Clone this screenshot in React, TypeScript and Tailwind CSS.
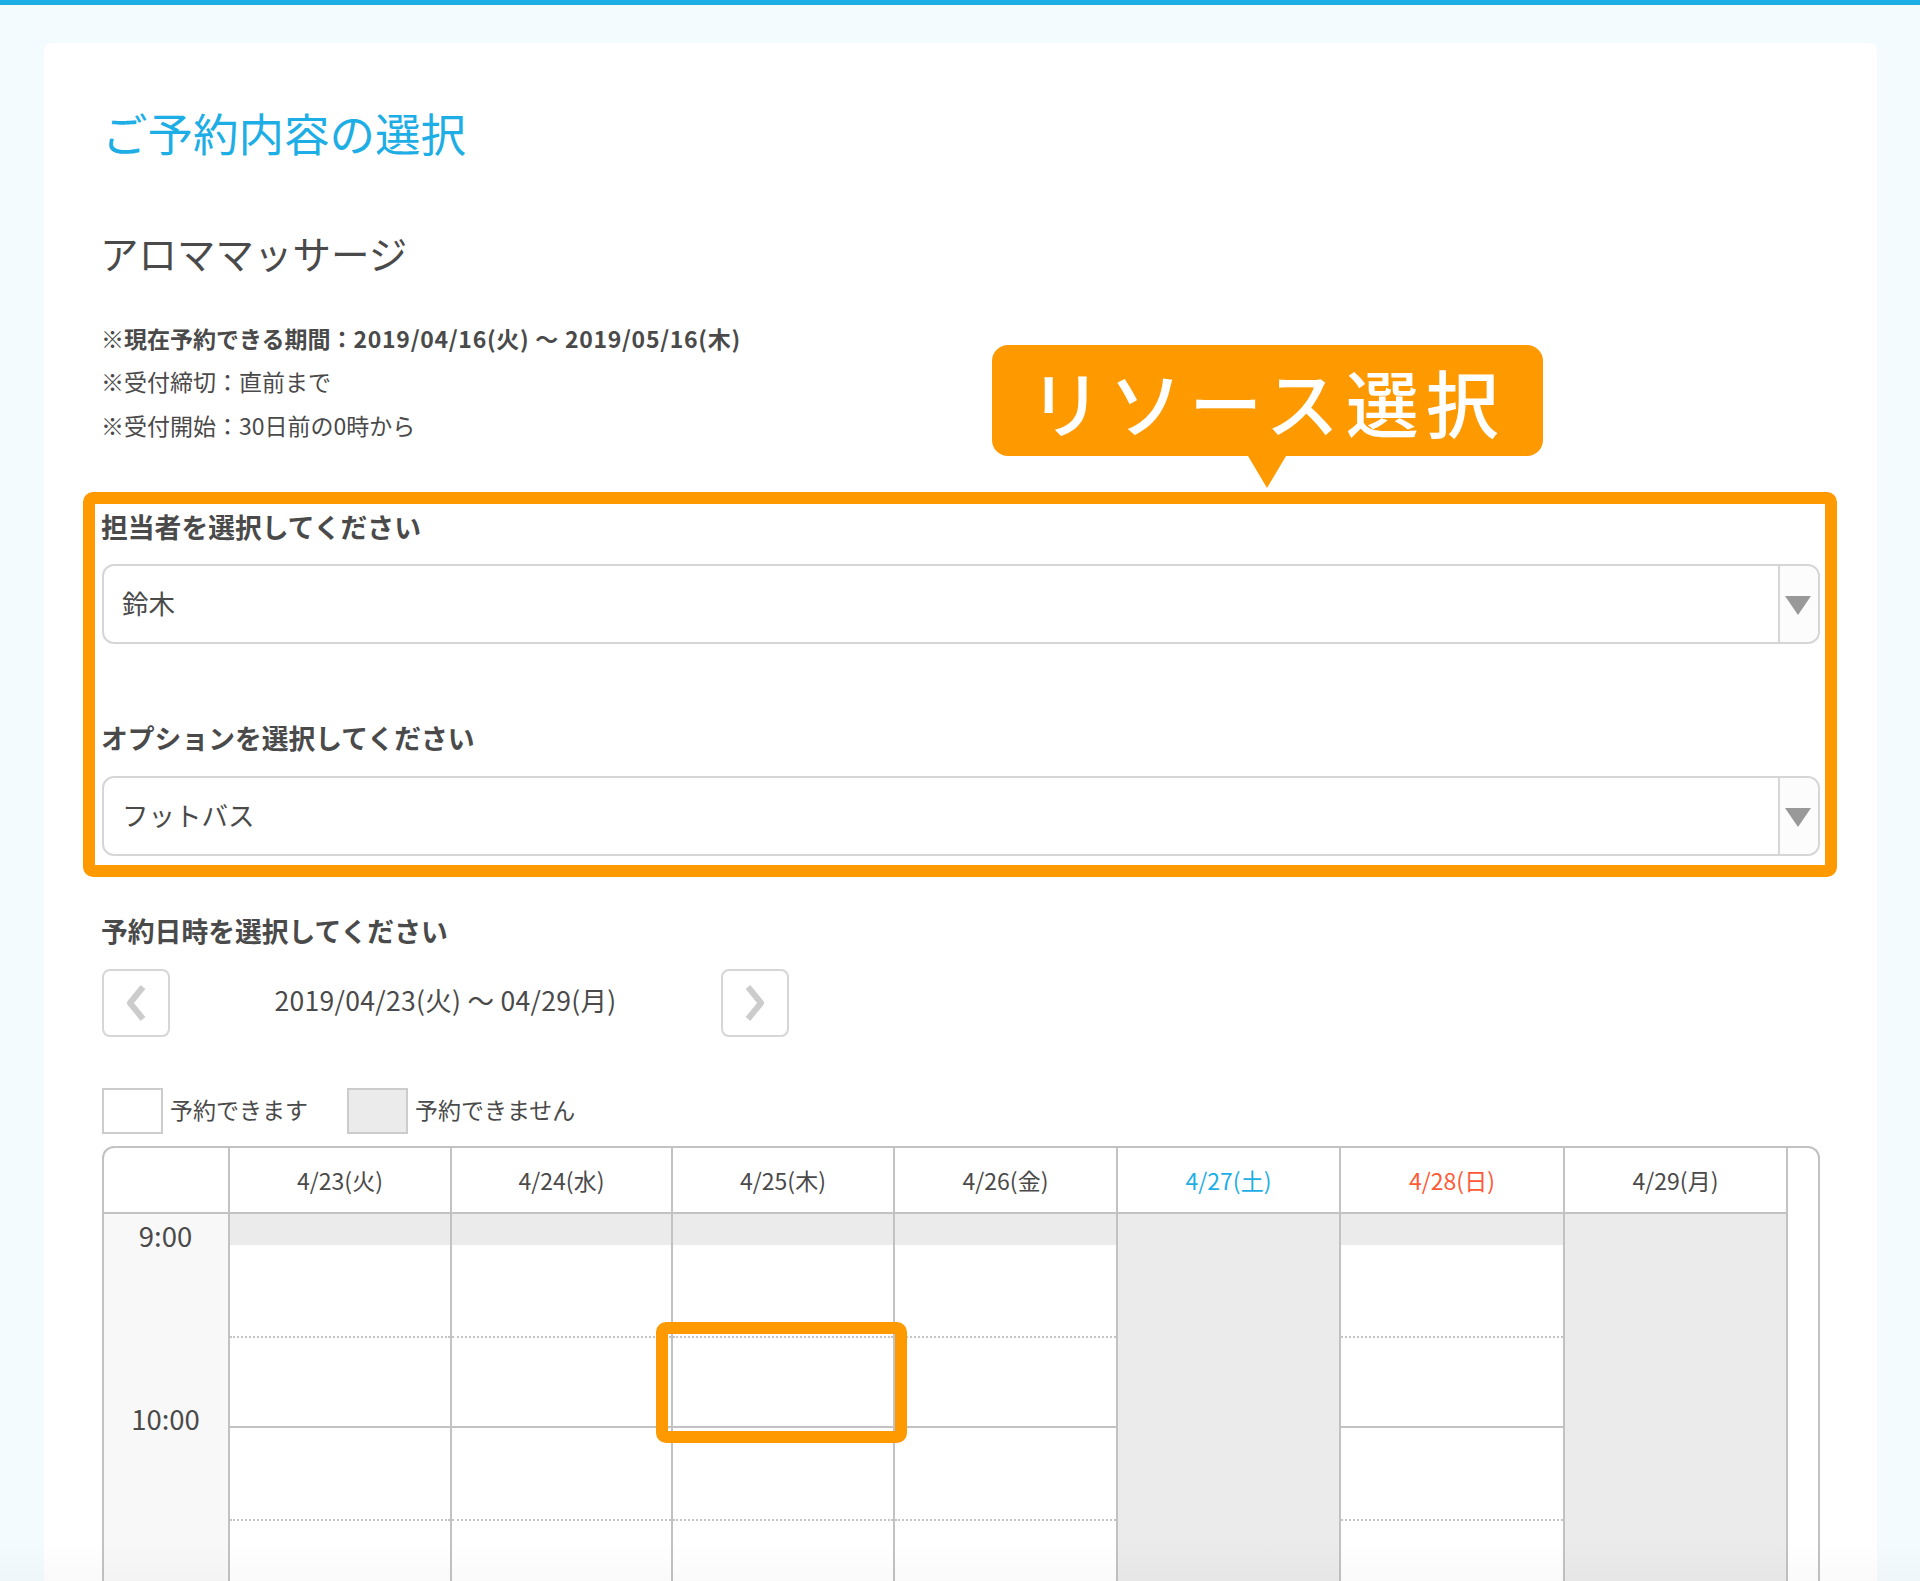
const days = [
  { label: '4/23(火)', color: 'text-[#4a4a4a]', closed: false },
  { label: '4/24(水)', color: 'text-[#4a4a4a]', closed: false },
  { label: '4/25(木)', color: 'text-[#4a4a4a]', closed: false },
  { label: '4/26(金)', color: 'text-[#4a4a4a]', closed: false },
  { label: '4/27(土)', color: 'text-[#1eaee6]', closed: true },
  { label: '4/28(日)', color: 'text-[#ff5a36]', closed: false },
  { label: '4/29(月)', color: 'text-[#4a4a4a]', closed: true },
];

function SelectBox({ value }: { value: string }) {
  return (
    <div className="flex h-20 w-[1718px] items-center rounded-xl border-2 border-[#d6d6d6] bg-white">
      <div className="flex-1 pb-[3px] pl-[18px] text-[26.5px]">{value}</div>
      <div className="flex h-full w-[40px] items-center justify-center rounded-r-xl border-l-2 border-[#d6d6d6] bg-[#fcfcfc]">
        <svg width="26" height="19" viewBox="0 0 26 19" className="mt-[3px] -ml-[2px]">
          <path d="M0 0H26L13 19Z" fill="#999999" />
        </svg>
      </div>
    </div>
  );
}

function NavButton({ dir }: { dir: 'prev' | 'next' }) {
  return (
    <div className="flex h-[68px] w-[68px] items-center justify-center rounded-lg border-2 border-[#d6d6d6] bg-white">
      <svg width="22" height="38" viewBox="0 0 22 38" fill="none">
        <path
          d={dir === 'prev' ? 'M18 3L5 19L18 35' : 'M4 3L17 19L4 35'}
          stroke="#cccccc"
          strokeWidth="6"
          strokeLinejoin="round"
        />
      </svg>
    </div>
  );
}

function DayColumn({ closed }: { closed: boolean }) {
  if (closed) return <div className="h-full border-l-2 border-[#c2c2c2] bg-[#ebebeb]" />;
  return (
    <div className="flex h-full flex-col border-l-2 border-[#c2c2c2] bg-white">
      <div className="h-[31px] shrink-0 bg-[#ebebeb]" />
      <div className="h-[93px] shrink-0 border-b-2 border-dotted border-[#c4c4c4]" />
      <div className="h-[90px] shrink-0 border-b-2 border-[#c2c2c2]" />
      <div className="h-[93px] shrink-0 border-b-2 border-dotted border-[#c4c4c4]" />
    </div>
  );
}

export default function App() {
  return (
    <div className="relative h-[1581px] overflow-hidden border-t-[5px] border-[#1eaee6] bg-[#f3fbff] font-['Noto_Sans_CJK_JP',sans-serif] text-[#4a4a4a]">
      <div className="relative mt-[38px] mr-[43px] ml-[44px] h-[1600px] rounded-t-lg bg-white pl-[58px]">
        <h1 className="pt-[55px] text-[45.5px] leading-[68px] font-normal text-[#1eaee6]">ご予約内容の選択</h1>
        <h2 className="mt-[58px] -ml-[2px] text-[38.5px] leading-[56px] font-normal">アロママッサージ</h2>

        <div className="mt-[39px] -ml-[1px] text-[23px]">
          <p className="h-[39px] leading-[39px] font-bold">
            ※現在予約できる期間：<span className="tracking-[0.7px]">2019/04/16(火) 〜 2019/05/16(木)</span>
          </p>
          <p className="h-[46px] leading-[46px]">※受付締切：直前まで</p>
          <p className="h-[43px] leading-[43px]">※受付開始：30日前の0時から</p>
        </div>

        <div className="mt-[60px] -ml-[1px] text-[26.8px] leading-[40px] font-bold">担当者を選択してください</div>
        <div className="mt-[17px]">
          <SelectBox value="鈴木" />
        </div>
        <div className="mt-[74px] -ml-[1px] text-[26.8px] leading-[40px] font-bold">オプションを選択してください</div>
        <div className="mt-[18px]">
          <SelectBox value="フットバス" />
        </div>
        <div className="mt-[55px] -ml-[1px] text-[26.8px] leading-[40px] font-bold">予約日時を選択してください</div>

        <div className="mt-[18px] flex items-center">
          <NavButton dir="prev" />
          <div className="w-[551px] pb-[6px] text-center text-[26.5px] tracking-[0.3px]">2019/04/23(火) 〜 04/29(月)</div>
          <NavButton dir="next" />
        </div>

        <div className="mt-[51px] flex h-[46px] items-center text-[23px]">
          <div className="h-[46px] w-[61px] border-2 border-[#cccccc] bg-white" />
          <span className="ml-[7px] w-[177px] pb-[4px]">予約できます</span>
          <div className="h-[46px] w-[61px] border-2 border-[#cccccc] bg-[#ebebeb]" />
          <span className="ml-[7px] pb-[4px]">予約できません</span>
        </div>

        <div className="mt-[12px] h-[700px] w-[1718px] rounded-t-xl border-2 border-b-0 border-[#c2c2c2]">
          <div className="grid h-full grid-cols-[124px_222px_221px_222px_223px_223px_224px_223px_1fr] grid-rows-[66px_1fr]">
            <div className="border-b-2 border-[#c2c2c2]" />
            {days.map((day) => (
              <div
                key={day.label}
                className={`flex items-center justify-center border-b-2 border-l-2 border-[#c2c2c2] text-[23px] ${day.color}`}
              >
                {day.label}
              </div>
            ))}
            <div className="border-l-2 border-[#c2c2c2]" />
            <div className="bg-[#f8f8f8] text-center text-[27.5px]">
              <div className="h-[184px] pt-[1px] pr-[1px] leading-[40px]">9:00</div>
              <div className="pr-[1px] leading-[40px]">10:00</div>
            </div>
            {days.map((day) => (
              <DayColumn key={day.label} closed={day.closed} />
            ))}
            <div className="border-l-2 border-[#c2c2c2]" />
          </div>
        </div>

        {/* orange annotations on top of the form */}
        <div className="absolute top-[449px] left-[39px] h-[385px] w-[1754px] rounded-[10px] border-[12px] border-[#ff9900]" />
        <div className="absolute top-[302px] left-[948px] flex h-[111px] w-[551px] items-center justify-center rounded-2xl bg-[#ff9900] text-[73px] font-medium tracking-[7px] text-white">
          リソース選択
        </div>
        <svg className="absolute top-[413px] left-[1204px]" width="38" height="32" viewBox="0 0 38 32">
          <path d="M0 0H38L19 32Z" fill="#ff9900" />
        </svg>
        <div className="absolute top-[1279px] left-[612px] h-[121px] w-[251px] rounded-[10px] border-[12px] border-[#ff9900]" />
      </div>
      <div className="pointer-events-none absolute right-0 bottom-0 left-0 h-[40px] bg-gradient-to-b from-transparent to-black/[0.02]" />
    </div>
  );
}
